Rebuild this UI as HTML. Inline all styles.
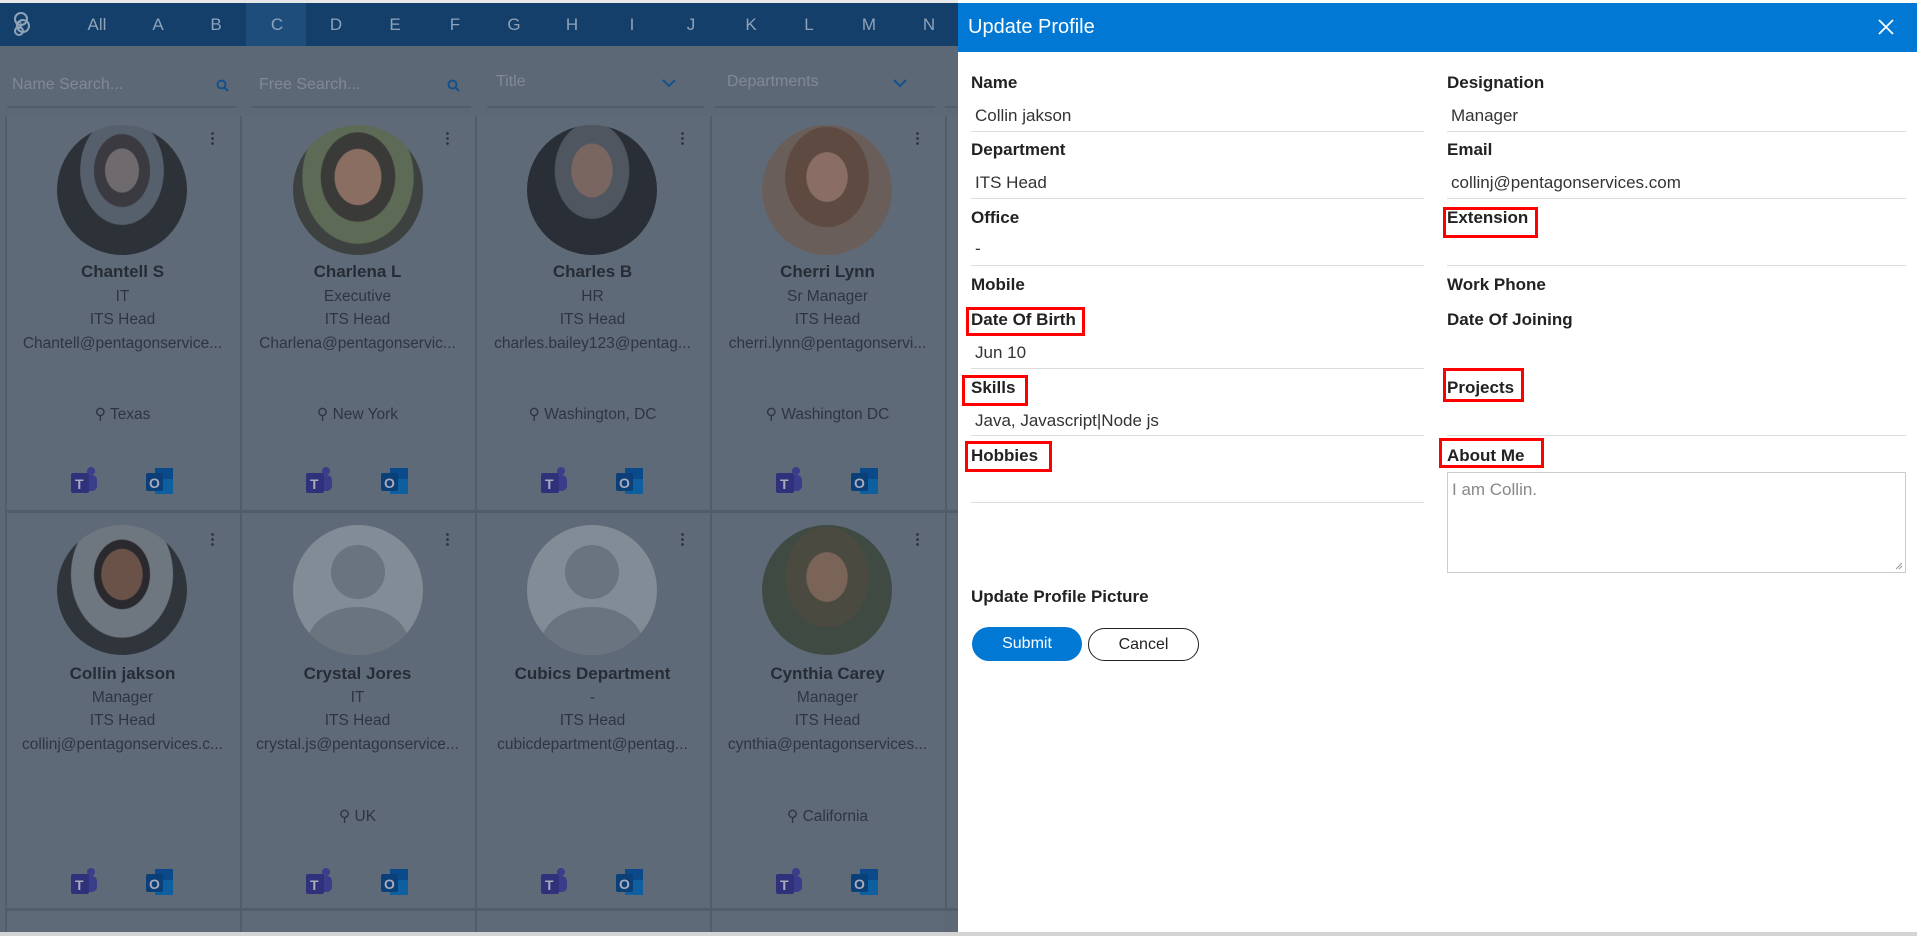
<!DOCTYPE html>
<html><head><meta charset="utf-8"><style>
*{margin:0;padding:0;box-sizing:border-box}
html{width:1917px;height:936px;overflow:hidden}
body{width:1917px;height:936px;overflow:hidden;position:relative;background:#5d6876;font-family:"Liberation Sans",sans-serif}
.a{position:absolute}
.nav{left:0;top:3px;width:958px;height:43px;background:#143f6a}
.nav span{position:absolute;top:12px;color:#8fa3b8;font-size:17px;transform:translateX(-50%)}
.card{position:absolute;background:#5f6a78;border-left:2px solid #525d6a;border-bottom:3px solid #525d6a}
.card .t{position:absolute;left:0;right:0;text-align:center;color:#2e3540;font-size:15.5px;white-space:nowrap;overflow:hidden}
.card .n{font-weight:bold;font-size:17px;color:#262c35}
.av{position:absolute;border-radius:50%;width:130px;height:130px}
.dots{position:absolute;width:3px;height:15px;background:radial-gradient(circle,#2e3540 1.2px,transparent 1.6px) 0 0/3px 5px}
.ti{position:absolute;width:28px;height:30px}
.panel{left:958px;top:0;width:959px;height:932px;background:#fff}
.hd{left:958px;top:3px;width:959px;height:49px;background:#0078d4;color:#fff}
.lb{position:absolute;font-size:17px;color:#222;font-weight:600}
.vl{position:absolute;font-size:17px;color:#333}
.ln{position:absolute;height:1px;background:#ddd}
.rb{position:absolute;border:3px solid #f00}
.inp{position:absolute;color:#7f8a96;font-size:16px}
.inpl{position:absolute;height:2px;background:#525d6a}
</style></head><body>
<div class="a" style="left:0;top:0;width:1917px;height:3px;background:#e8e8e8"></div>
<div class="a nav">
<div class="a" style="left:246px;top:0;width:60px;height:43px;background:#1e4d7c"></div>
<svg class="a" style="left:10px;top:8px" width="22" height="26" viewBox="0 0 22 26"><circle cx="11" cy="8" r="6" fill="none" stroke="#8fa3b8" stroke-width="2"/><circle cx="13" cy="15" r="6" fill="none" stroke="#8fa3b8" stroke-width="2"/><circle cx="9" cy="20" r="4" fill="none" stroke="#8fa3b8" stroke-width="2"/><text x="5" y="18" font-size="11" font-weight="bold" fill="#8fa3b8" font-family="Liberation Sans">S</text></svg>
<span style="left:97px">All</span><span style="left:158px">A</span><span style="left:216px">B</span><span style="left:277px">C</span><span style="left:336px">D</span><span style="left:395px">E</span><span style="left:455px">F</span><span style="left:514px">G</span><span style="left:572px">H</span><span style="left:632px">I</span><span style="left:691px">J</span><span style="left:751px">K</span><span style="left:809px">L</span><span style="left:869px">M</span><span style="left:929px">N</span>
</div>
<div class="inp" style="left:12px;top:76px">Name Search...</div><div class="inp" style="left:259px;top:76px">Free Search...</div>
<div class="inp" style="left:496px;top:73px">Title</div><div class="inp" style="left:727px;top:73px">Departments</div>
<svg class="a" style="left:216px;top:79px" width="13" height="14"><circle cx="5.5" cy="5.5" r="4" fill="none" stroke="#14508a" stroke-width="2"/><path d="M8.5 8.5 L12 12" stroke="#14508a" stroke-width="2"/></svg>
<svg class="a" style="left:447px;top:79px" width="13" height="14"><circle cx="5.5" cy="5.5" r="4" fill="none" stroke="#14508a" stroke-width="2"/><path d="M8.5 8.5 L12 12" stroke="#14508a" stroke-width="2"/></svg>
<svg class="a" style="left:662px;top:78px" width="14" height="10"><path d="M1 2 L7 8 L13 2" fill="none" stroke="#14508a" stroke-width="2"/></svg>
<svg class="a" style="left:893px;top:78px" width="14" height="10"><path d="M1 2 L7 8 L13 2" fill="none" stroke="#14508a" stroke-width="2"/></svg>
<div class="inpl" style="left:7px;top:106px;width:229px"></div><div class="inpl" style="left:252px;top:106px;width:219px"></div><div class="inpl" style="left:487px;top:106px;width:217px"></div><div class="inpl" style="left:715px;top:106px;width:220px"></div><div class="inpl" style="left:945px;top:106px;width:13px"></div>

<!-- cards -->
<div class="card" style="left:5px;top:116px;width:235px;height:397px"></div>
<div class="card" style="left:240px;top:116px;width:235px;height:397px"></div>
<div class="card" style="left:475px;top:116px;width:235px;height:397px"></div>
<div class="card" style="left:710px;top:116px;width:235px;height:397px"></div>
<div class="card" style="left:945px;top:116px;width:235px;height:397px"></div>
<div class="card" style="left:5px;top:513px;width:235px;height:398px"></div>
<div class="card" style="left:240px;top:513px;width:235px;height:398px"></div>
<div class="card" style="left:475px;top:513px;width:235px;height:398px"></div>
<div class="card" style="left:710px;top:513px;width:235px;height:398px"></div>
<div class="card" style="left:945px;top:513px;width:235px;height:398px"></div>
<div class="card" style="left:5px;top:911px;width:235px;height:21px;border-bottom:0"></div>
<div class="card" style="left:240px;top:911px;width:235px;height:21px;border-bottom:0"></div>
<div class="card" style="left:475px;top:911px;width:235px;height:21px;border-bottom:0"></div>
<div class="card" style="left:710px;top:911px;width:235px;height:21px;border-bottom:0"></div>

<!-- avatars row1 -->
<div class="av" style="left:57px;top:125px;background:radial-gradient(ellipse at 50% 35%,#6e6a6e 0 18%,#3a3a40 19% 30%,#56606c 31% 45%,#2d3138 46%)"></div>
<div class="av" style="left:293px;top:125px;background:radial-gradient(ellipse at 50% 40%,#8a6e62 0 25%,#3a3a38 26% 40%,#5d6a55 41% 60%,#3d4240 61%)"></div>
<div class="av" style="left:527px;top:125px;background:radial-gradient(ellipse at 50% 35%,#7a6660 0 22%,#4f5660 23% 40%,#2a2e36 41%)"></div>
<div class="av" style="left:762px;top:125px;background:radial-gradient(ellipse at 50% 40%,#8a6e66 0 22%,#5e4a40 23% 45%,#6a5e5a 46%)"></div>
<!-- row2 -->
<div class="av" style="left:57px;top:525px;background:radial-gradient(ellipse at 50% 38%,#6a5248 0 22%,#2a2a2e 23% 30%,#6e7680 31% 55%,#30353c 56%)"></div>
<div class="av" style="left:293px;top:525px;background:#828c96;overflow:hidden"><div class="a" style="left:38px;top:20px;width:54px;height:54px;border-radius:50%;background:#6a747e"></div><div class="a" style="left:15px;top:82px;width:100px;height:70px;border-radius:50%;background:#6a747e"></div></div>
<div class="av" style="left:527px;top:525px;background:#828c96;overflow:hidden"><div class="a" style="left:38px;top:20px;width:54px;height:54px;border-radius:50%;background:#6a747e"></div><div class="a" style="left:15px;top:82px;width:100px;height:70px;border-radius:50%;background:#6a747e"></div></div>
<div class="av" style="left:762px;top:525px;background:radial-gradient(ellipse at 50% 40%,#7a6458 0 22%,#4a4a40 23% 45%,#3f4a42 46%)"></div>

<div class="dots" style="left:211px;top:131px"></div><div class="dots" style="left:446px;top:131px"></div><div class="dots" style="left:681px;top:131px"></div><div class="dots" style="left:916px;top:131px"></div>
<div class="dots" style="left:211px;top:532px"></div><div class="dots" style="left:446px;top:532px"></div><div class="dots" style="left:681px;top:532px"></div><div class="dots" style="left:916px;top:532px"></div>

<!-- text col -->
<div class="a" style="left:5px;top:0;width:235px">
<div class="card" style="border:0;background:none;left:0;top:0;width:235px;height:936px">
<div class="t n" style="top:262px">Chantell S</div><div class="t" style="top:288px">IT</div><div class="t" style="top:311px">ITS Head</div><div class="t" style="top:335px">Chantell@pentagonservice...</div><div class="t" style="top:405px">⚲ Texas</div>
<div class="t n" style="top:664px">Collin jakson</div><div class="t" style="top:689px">Manager</div><div class="t" style="top:712px">ITS Head</div><div class="t" style="top:736px">collinj@pentagonservices.c...</div>
</div></div>
<div class="a" style="left:240px;top:0;width:235px">
<div class="card" style="border:0;background:none;left:0;top:0;width:235px;height:936px">
<div class="t n" style="top:262px">Charlena L</div><div class="t" style="top:288px">Executive</div><div class="t" style="top:311px">ITS Head</div><div class="t" style="top:335px">Charlena@pentagonservic...</div><div class="t" style="top:405px">⚲ New York</div>
<div class="t n" style="top:664px">Crystal Jores</div><div class="t" style="top:689px">IT</div><div class="t" style="top:712px">ITS Head</div><div class="t" style="top:736px">crystal.js@pentagonservice...</div><div class="t" style="top:807px">⚲ UK</div>
</div></div>
<div class="a" style="left:475px;top:0;width:235px">
<div class="card" style="border:0;background:none;left:0;top:0;width:235px;height:936px">
<div class="t n" style="top:262px">Charles B</div><div class="t" style="top:288px">HR</div><div class="t" style="top:311px">ITS Head</div><div class="t" style="top:335px">charles.bailey123@pentag...</div><div class="t" style="top:405px">⚲ Washington, DC</div>
<div class="t n" style="top:664px">Cubics Department</div><div class="t" style="top:689px">-</div><div class="t" style="top:712px">ITS Head</div><div class="t" style="top:736px">cubicdepartment@pentag...</div>
</div></div>
<div class="a" style="left:710px;top:0;width:235px">
<div class="card" style="border:0;background:none;left:0;top:0;width:235px;height:936px">
<div class="t n" style="top:262px">Cherri Lynn</div><div class="t" style="top:288px">Sr Manager</div><div class="t" style="top:311px">ITS Head</div><div class="t" style="top:335px">cherri.lynn@pentagonservi...</div><div class="t" style="top:405px">⚲ Washington DC</div>
<div class="t n" style="top:664px">Cynthia Carey</div><div class="t" style="top:689px">Manager</div><div class="t" style="top:712px">ITS Head</div><div class="t" style="top:736px">cynthia@pentagonservices...</div><div class="t" style="top:807px">⚲ California</div>
</div></div>

<!-- icons -->
<svg width="0" height="0" style="position:absolute"><defs>
<g id="tm"><circle cx="21" cy="6" r="4" fill="#3a3d8a"/><rect x="14" y="10" width="13" height="16" rx="5" fill="#3a3d8a"/><rect x="1" y="8" width="18" height="20" rx="2" fill="#2f327a"/><text x="5" y="24" font-size="14" font-weight="bold" fill="#aab" font-family="Liberation Sans">T</text></g>
<g id="ol"><rect x="10" y="3" width="18" height="24" fill="#0a4a8a"/><path d="M10 14 L28 14 L28 29 L10 29Z" fill="#0d5fa0"/><rect x="1" y="8" width="17" height="18" rx="2" fill="#0a3f78"/><text x="4" y="23" font-size="14" font-weight="bold" fill="#aab" font-family="Liberation Sans">O</text></g>
</defs></svg>
<svg class="ti" style="left:70px;top:465px"><use href="#tm"/></svg><svg class="ti" style="left:145px;top:465px"><use href="#ol"/></svg>
<svg class="ti" style="left:305px;top:465px"><use href="#tm"/></svg><svg class="ti" style="left:380px;top:465px"><use href="#ol"/></svg>
<svg class="ti" style="left:540px;top:465px"><use href="#tm"/></svg><svg class="ti" style="left:615px;top:465px"><use href="#ol"/></svg>
<svg class="ti" style="left:775px;top:465px"><use href="#tm"/></svg><svg class="ti" style="left:850px;top:465px"><use href="#ol"/></svg>
<svg class="ti" style="left:70px;top:866px"><use href="#tm"/></svg><svg class="ti" style="left:145px;top:866px"><use href="#ol"/></svg>
<svg class="ti" style="left:305px;top:866px"><use href="#tm"/></svg><svg class="ti" style="left:380px;top:866px"><use href="#ol"/></svg>
<svg class="ti" style="left:540px;top:866px"><use href="#tm"/></svg><svg class="ti" style="left:615px;top:866px"><use href="#ol"/></svg>
<svg class="ti" style="left:775px;top:866px"><use href="#tm"/></svg><svg class="ti" style="left:850px;top:866px"><use href="#ol"/></svg>

<!-- panel -->
<div class="a panel"></div>
<div class="a hd"><div class="a" style="left:10px;top:13px;font-size:20px">Update Profile</div>
<svg class="a" style="left:920px;top:16px" width="16" height="16"><path d="M1 1 L15 15 M15 1 L1 15" stroke="#fff" stroke-width="1.8"/></svg></div>

<div class="lb" style="left:971px;top:73px">Name</div><div class="vl" style="left:975px;top:106px">Collin jakson</div><div class="ln" style="left:971px;top:131px;width:453px"></div>
<div class="lb" style="left:1447px;top:73px">Designation</div><div class="vl" style="left:1451px;top:106px">Manager</div><div class="ln" style="left:1447px;top:131px;width:459px"></div>
<div class="lb" style="left:971px;top:140px">Department</div><div class="vl" style="left:975px;top:173px">ITS Head</div><div class="ln" style="left:971px;top:198px;width:453px"></div>
<div class="lb" style="left:1447px;top:140px">Email</div><div class="vl" style="left:1451px;top:173px">collinj@pentagonservices.com</div><div class="ln" style="left:1447px;top:198px;width:459px"></div>
<div class="lb" style="left:971px;top:208px">Office</div><div class="vl" style="left:975px;top:239px">-</div><div class="ln" style="left:971px;top:265px;width:453px"></div>
<div class="lb" style="left:1447px;top:208px">Extension</div><div class="ln" style="left:1447px;top:265px;width:459px"></div>
<div class="lb" style="left:971px;top:275px">Mobile</div><div class="lb" style="left:1447px;top:275px">Work Phone</div>
<div class="lb" style="left:971px;top:310px">Date Of Birth</div><div class="lb" style="left:1447px;top:310px">Date Of Joining</div>
<div class="vl" style="left:975px;top:343px">Jun 10</div><div class="ln" style="left:971px;top:368px;width:453px"></div>
<div class="lb" style="left:971px;top:378px">Skills</div><div class="lb" style="left:1447px;top:378px">Projects</div>
<div class="vl" style="left:975px;top:411px">Java, Javascript|Node js</div><div class="ln" style="left:971px;top:435px;width:453px"></div><div class="ln" style="left:1447px;top:435px;width:459px"></div>
<div class="lb" style="left:971px;top:446px">Hobbies</div><div class="lb" style="left:1447px;top:446px">About Me</div>
<div class="ln" style="left:971px;top:502px;width:453px"></div>
<div class="a" style="left:1447px;top:472px;width:459px;height:101px;border:1px solid #ccc"><div class="a" style="left:4px;top:7px;font-size:17px;color:#888">I am Collin.</div>
<svg class="a" style="right:2px;bottom:2px" width="8" height="8"><path d="M1 7 L7 1 M4 7 L7 4" stroke="#999"/></svg></div>
<div class="lb" style="left:971px;top:587px">Update Profile Picture</div>
<div class="a" style="left:972px;top:627px;width:110px;height:34px;border-radius:17px;background:#0078d4;color:#fff;font-size:16px;text-align:center;line-height:34px">Submit</div>
<div class="a" style="left:1088px;top:628px;width:111px;height:33px;border-radius:17px;border:1px solid #222;color:#222;font-size:16px;text-align:center;line-height:31px">Cancel</div>

<div class="rb" style="left:1443px;top:207px;width:95px;height:31px"></div>
<div class="rb" style="left:966px;top:307px;width:119px;height:29px"></div>
<div class="rb" style="left:962px;top:375px;width:66px;height:31px"></div>
<div class="rb" style="left:1443px;top:368px;width:81px;height:34px"></div>
<div class="rb" style="left:965px;top:441px;width:87px;height:31px"></div>
<div class="rb" style="left:1439px;top:438px;width:105px;height:30px"></div>

<div class="a" style="left:0;top:932px;width:1917px;height:4px;background:#d4d4d4"></div>
</body></html>
